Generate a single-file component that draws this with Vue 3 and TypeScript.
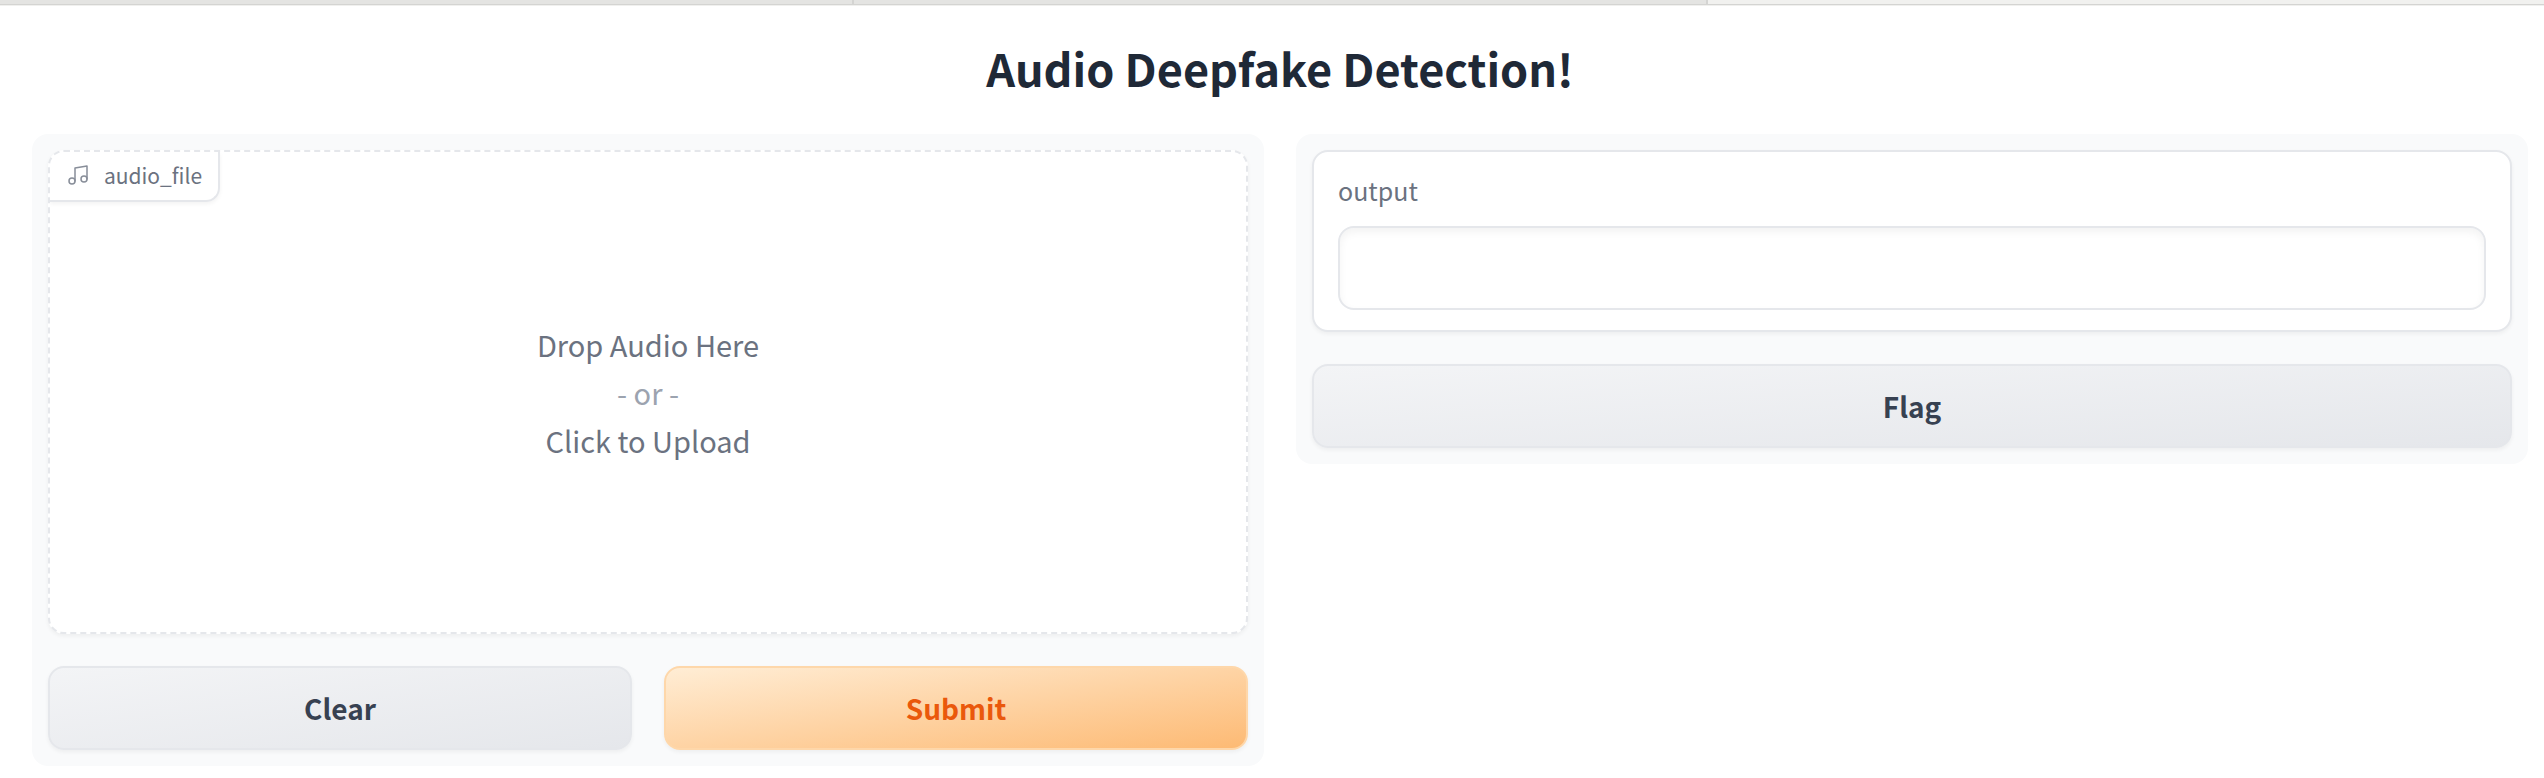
<script setup lang="ts">
import { ref } from 'vue'

const tabs = ref([
  { id: 1, active: false },
  { id: 2, active: false },
  { id: 3, active: true },
])
const output = ref<string>('')

function clear(): void {
  output.value = ''
}
</script>

<template>
  <div class="page">
    <div class="tab-strip" aria-hidden="true">
      <div v-for="tab in tabs" :key="tab.id" class="tab" :class="{ active: tab.active }"></div>
    </div>
    <main class="content">
      <h1>Audio Deepfake Detection!</h1>
      <div class="columns">
        <section class="panel">
          <div class="block drop-block">
            <div class="block-label">
              <svg class="icon" viewBox="0 0 24 24" fill="none" stroke="currentColor" stroke-width="1.5" stroke-linecap="round" stroke-linejoin="round" aria-hidden="true">
                <path d="M9 18V5l12-2v13" />
                <circle cx="6" cy="18" r="3" />
                <circle cx="18" cy="16" r="3" />
              </svg>
              <span>audio_file</span>
            </div>
            <button type="button" class="drop-zone">
              <span>Drop Audio Here</span>
              <span class="or">- or -</span>
              <span>Click to Upload</span>
            </button>
          </div>
          <div class="actions">
            <button type="button" class="btn secondary" @click="clear">Clear</button>
            <button type="button" class="btn primary">Submit</button>
          </div>
        </section>
        <section class="panel">
          <div class="block output-block">
            <label for="output">output</label>
            <input id="output" v-model="output" type="text" readonly />
          </div>
          <button type="button" class="btn secondary">Flag</button>
        </section>
      </div>
    </main>
  </div>
</template>

<style>
body {
  background: #ffffff;
}
</style>

<style scoped>
.page {
  font-family: "Noto Sans CJK SC", "Noto Sans", sans-serif;
  font-weight: 400;
  color: #1f2937;
}

.page *,
.page {
  box-sizing: border-box;
}

.tab-strip {
  display: grid;
  grid-template-columns: 854fr 854fr 836fr;
  height: 6px;
  border-bottom: 1px solid #f0f0ee;
}

.tab {
  background: #e4e4e2;
  border: solid #d4d4d2;
  border-width: 0 2px 1px 0;
}

.tab.active {
  background: #f1f1ef;
  border-right-width: 0;
}

.content {
  padding: 32px 16px 12px 32px;
}

h1 {
  margin: 0 0 36px;
  font-size: 45px;
  line-height: 60px;
  font-weight: 700;
  text-align: center;
}

.columns {
  display: grid;
  grid-template-columns: 1fr 1fr;
  align-items: start;
  gap: 32px;
}

.panel {
  display: flex;
  flex-direction: column;
  gap: 32px;
  padding: 16px;
  border-radius: 16px;
  background: #f9fafb;
}

.block {
  border: 2px solid #e5e7eb;
  border-radius: 16px;
  background: #ffffff;
  box-shadow: 0 2px 4px rgba(0, 0, 0, 0.05);
}

.drop-block {
  display: grid;
  border-style: dashed;
  overflow: hidden;
}

.block-label {
  grid-area: 1 / 1;
  justify-self: start;
  align-self: start;
  display: flex;
  align-items: center;
  gap: 14px;
  height: 50px;
  padding: 0 16px 2px;
  border: solid #e5e7eb;
  border-width: 0 2px 2px 0;
  border-bottom-right-radius: 14px;
  box-shadow: 0 2px 4px rgba(0, 0, 0, 0.05);
  color: #6b7280;
  font-size: 21px;
  line-height: 32px;
}

.icon {
  width: 24px;
  height: 24px;
  opacity: 0.8;
}

.drop-zone {
  grid-area: 1 / 1;
  display: flex;
  flex-direction: column;
  align-items: center;
  justify-content: center;
  min-height: 480px;
  padding: 0;
  border: 0;
  background: transparent;
  color: #6b7280;
  font-family: inherit;
  font-size: 29px;
  line-height: 48px;
  cursor: pointer;
}

.or {
  color: #9ca3af;
}

.actions {
  display: grid;
  grid-template-columns: 1fr 1fr;
  gap: 32px;
}

.btn {
  height: 84px;
  padding: 0 32px;
  border: 2px solid #e5e7eb;
  border-radius: 16px;
  box-shadow: 0 2px 4px rgba(0, 0, 0, 0.05);
  font-family: inherit;
  font-size: 28px;
  line-height: 48px;
  font-weight: 700;
  cursor: pointer;
}

.secondary {
  background: linear-gradient(to bottom right, #f3f4f6, #e5e7eb);
  color: #374151;
}

.primary {
  border-color: #fed7aa;
  background: linear-gradient(to bottom right, #ffedd5, #fdba74);
  color: #ea580c;
}

.output-block {
  display: flex;
  flex-direction: column;
  gap: 18px;
  padding: 20px 24px;
}

label {
  color: #6b7280;
  font-size: 25px;
  line-height: 36px;
}

input {
  width: 100%;
  height: 84px;
  padding: 0 20px;
  border: 2px solid #e5e7eb;
  border-radius: 16px;
  background: #ffffff;
  box-shadow: inset 0 4px 8px rgba(0, 0, 0, 0.05);
  color: #1f2937;
  font-family: inherit;
  font-size: 29px;
}
</style>
